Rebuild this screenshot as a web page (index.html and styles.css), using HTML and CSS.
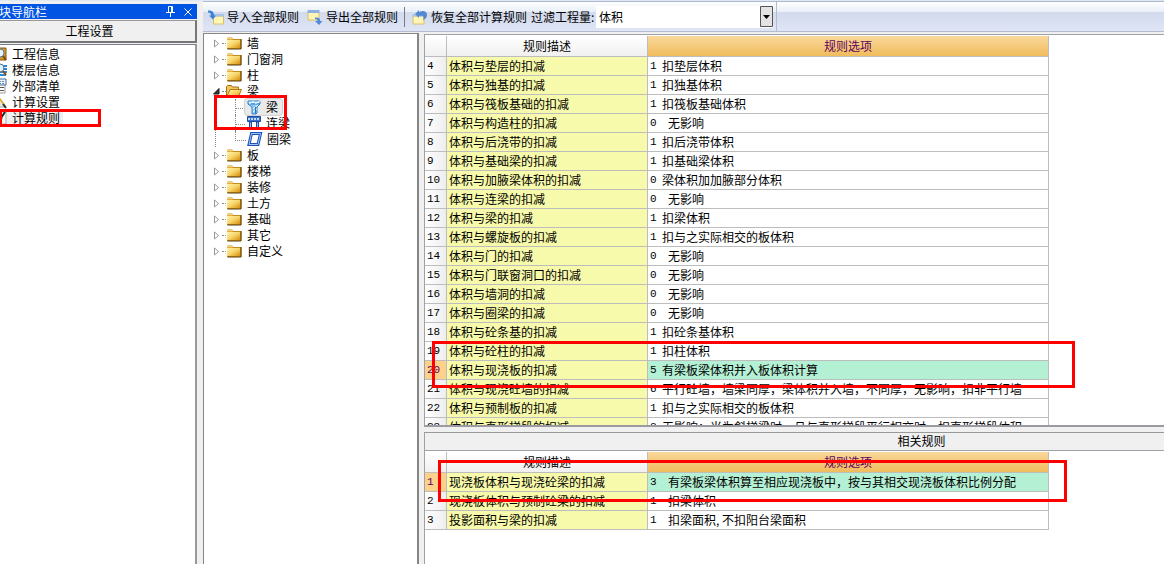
FILE: index.html
```html
<!DOCTYPE html>
<html lang="zh-CN">
<head>
<meta charset="utf-8">
<title>工程设置 - 计算规则</title>
<link rel="stylesheet" href="styles.css">
</head>
<body>
<svg class="defs" aria-hidden="true">
  <defs>
    <linearGradient id="gold" x1="0" y1="0" x2="1" y2="1"><stop offset="0" stop-color="#fff3a8"/><stop offset=".5" stop-color="#f7d46a"/><stop offset="1" stop-color="#d98e10"/></linearGradient>
    <symbol id="folder" viewBox="0 0 16 14"><path d="M1 2.500l1-1h4l1 1.500h8.500v10H1z" fill="#c78a1c"/><path d="M1 1.500h5l1 2H1z" fill="#f3d27c"/><path d="M1 4h13v8H1z" fill="url(#gold)"/><path d="M15 3v10H1.500" fill="none" stroke="#5e430c"/></symbol>
    <symbol id="folder-open" viewBox="0 0 16 14"><path d="M.5 12.500v-10l1-1h4l1 1.500h6v2" fill="#f3c760" stroke="#a5710f"/><path d="M1 12.500l3-7h11.500l-3 7z" fill="url(#gold)" stroke="#b37a12"/></symbol>
    <symbol id="closed" viewBox="0 0 7 9"><path d="M1.500 1v7l4-3.500z" fill="#fff" stroke="#999"/></symbol>
    <symbol id="opened" viewBox="0 0 7 7"><path d="M6 .5v5.500H.5z" fill="#333" stroke="#222"/></symbol>
    <symbol id="beam" viewBox="0 0 16 16"><path d="M2 2h12v3H2z" fill="#d9efff" stroke="#2d83cf"/><path d="M2 5h12l-3 3v6l-1 1H6V8z" fill="#8ec8f2" stroke="#2d83cf"/><path d="M3 5l5-3M9 5l5-3M7 10l5-4M7 13l4-3" fill="none" stroke="#f2faff"/><path d="M9.500 8v6.500" stroke="#2374c0"/></symbol>
    <symbol id="link-beam" viewBox="0 0 16 16"><path d="M1.500 1.500h13v5h-13z" fill="#3c73c8" stroke="#1c4ea5"/><path d="M2 4h12" stroke="#bcd9fa" stroke-width="2" stroke-dasharray="2 1"/><path d="M3.500 7h2v6h-2zM10.500 7h2v6h-2z" fill="#9ac5f5" stroke="#1c4ea5"/></symbol>
    <symbol id="ring-beam" viewBox="0 0 16 16"><path d="M4.500 2.500h9l-2.500 11H2z" fill="#fff" stroke="#1d51b8" stroke-width="3"/><path d="M4.500 2.500h9l-2.500 11H2z" fill="none" stroke="#9cc5f5"/></symbol>
  </defs>
</svg>
<div class="app">
  <aside class="side">
    <header class="side-title"><span class="side-name">模块导航栏</span>
      <button class="mini" aria-label="固定"><svg width="9" height="11" viewBox="0 0 9 11"><path d="M2.500 6V.5h4V6M5.500 1v5M0 6.500h9M4.500 7v4" fill="none" stroke="#fff"/></svg></button>
      <button class="mini" aria-label="关闭"><svg width="8" height="8" viewBox="0 0 8 8"><path d="M.5.5l7 7M7.500.5l-7 7" stroke="#fff"/></svg></button>
    </header>
    <button class="side-group">工程设置</button>
    <nav class="side-list">
      <a href="#"><svg width="16" height="16" viewBox="0 0 16 16"><path d="M4 2h11v12H4z" fill="#d69829" stroke="#865b13"/><circle cx="9" cy="7" r="4" fill="#e6f5ff" stroke="#567ca4"/><path d="M12 10l3 4" stroke="#7b4c14" stroke-width="2"/></svg>工程信息</a>
      <a href="#"><svg width="16" height="16" viewBox="0 0 16 16"><path d="M9 4h7M9 7h7M8 10h8M8 13h7" stroke="#278bd6" stroke-width="2"/><circle cx="9" cy="6" r="4" fill="#dff1fd" stroke="#4d7499"/><path d="M12 9l3 4" stroke="#9b4b12" stroke-width="2"/></svg>楼层信息</a>
      <a href="#"><svg width="16" height="16" viewBox="0 0 16 16"><path d="M4 6h10v9H4z" fill="#fff" stroke="#999"/><path d="M3 1h12v6H3z" fill="#eaf2fb" stroke="#486d98"/><path d="M5 3.500h9M5 5.500h9" stroke="#638cb9" stroke-dasharray="2 1"/><path d="M9 9.500h4M9 12.500h4" stroke="#555"/></svg>外部清单</a>
      <a href="#"><svg width="16" height="16" viewBox="0 0 16 16"><path d="M6 2l9 11H6z" fill="#e5e8eb" stroke="#9aa"/><path d="M6 1l8 11" stroke="#e4b03c" stroke-width="2"/><path d="M12 10l3 4" stroke="#333" stroke-width="2"/></svg>计算设置</a>
      <a href="#" class="current"><svg width="16" height="16" viewBox="0 0 16 16"><path d="M4 2h11v12H4z" fill="#f7f5ed" stroke="#aaa"/><path d="M14 2L8 11l-2 2" stroke="#222" stroke-width="2"/><path d="M8 12l3-4" stroke="#48a068" stroke-width="2"/></svg>计算规则</a>
    </nav>
  </aside>
  <main class="work">
    <div class="toolbar">
      <button class="tool"><svg width="16" height="16" viewBox="0 0 16 16"><path d="M5.500 7h10v8h-10z" fill="#fff5b5" stroke="#d8c06b"/><path d="M6 5h10v2.500H6z" fill="#a9c2ea"/><path d="M0 1.500c4 0 6 1 6 5h2L5 10.500 1 6.500h2c0-2-1-3-3-3z" fill="#3e82d6"/></svg>导入全部规则</button>
      <button class="tool tool-last"><svg width="16" height="16" viewBox="0 0 16 16"><path d="M1 3h11v8H1z" fill="#fff5b5" stroke="#d8c06b"/><path d="M.5 1h12v3H.5z" fill="#8fb0e4"/><path d="M8 8.500c3 0 5 0 5 3.500h2.500L12 16l-4-4h2.500c0-1.500-1-2-2.500-2z" fill="#4c89db"/></svg>导出全部规则</button>
      <span class="divider"></span>
      <button class="tool tool-reset"><svg width="16" height="16" viewBox="0 0 16 16"><path d="M1 7h11v8H1z" fill="#fff5b5" stroke="#d8c06b"/><path d="M.5 5h12v2.500H.5z" fill="#a9c2ea"/><path d="M3 5l4-4v2c4-2 8-1 8 3 0 3-2 4-4 5 1-3 1-5-4-4v2z" fill="#5489d2"/></svg>恢复全部计算规则</button>
      <label class="filter-label" for="filter">过滤工程量:</label>
      <span class="combo"><select id="filter"><option>体积</option></select><svg class="combo-arrow" width="13" height="21" viewBox="0 0 13 21"><path d="M.5.5h12v20H.5z" fill="#e3e3e3" stroke="#555"/><path d="M3 9h7l-3.500 4z"/></svg></span>
      <span class="toolbar-end"></span>
    </div>
    <div class="body">
      <section class="tree">
        <ul id="tree"></ul>
      </section>
      <div class="panes">
        <section class="pane pane-top"><table class="grid" id="rules"></table></section>
        <section class="pane pane-bottom">
          <h2 class="pane-title">相关规则</h2>
          <table class="grid" id="related"></table>
        </section>
      </div>
    </div>
  </main>
  <div class="mark mark-nav"></div>
  <div class="mark mark-tree"></div>
  <div class="mark mark-rule"></div>
  <div class="mark mark-related"></div>
</div>
<script src="app.js"></script>
</body>
</html>
```

FILE: styles.css
```css
* { box-sizing: border-box; }
body {
  margin: 0;
  background: #f0f0f0;
  color: #000;
  font: 12px/16px "Noto Sans CJK SC", sans-serif;
}
button, select { font: inherit; color: inherit; }
ul { list-style: none; margin: 0; padding: 0; }
.defs { position: absolute; width: 0; height: 0; }
.app {
  position: relative;
  display: flex;
  gap: 6px;
  height: 100vh;
  overflow: hidden;
  border-top: 1px solid #dfe7f5;
}

.side { display: flex; flex-direction: column; flex: none; width: 197px; padding-top: 3px; }
.side-title {
  display: flex;
  align-items: center;
  height: 15px;
  margin-bottom: 1px;
  padding-right: 0;
  background: #0054e3;
  color: #fff;
}
.side-name { display: flex; flex: 1; justify-content: flex-end; max-width: 47px; margin-right: auto; line-height: 14px; white-space: nowrap; }
.mini { display: flex; align-items: center; justify-content: center; width: 18px; height: 15px; padding: 0; border: 0; background: none; }
.side-group {
  height: 23px;
  margin-bottom: 1px;
  padding: 0 16px 0 0;
  border: solid;
  border-width: 1px 2px 2px 0;
  border-color: #999 #777 #777 #999;
  background: #f0f0f0;
}
.side-list {
  flex: 1;
  padding-top: 1px;
  border: solid #7b8088;
  border-width: 1px 2px 0 0;
  border-right-color: #999;
  background: #fff;
}
.side-list a { display: flex; align-items: center; width: 63px; height: 16px; color: #000; text-decoration: none; white-space: nowrap; }
.side-list svg { flex: none; margin: 0 5px 0 -9px; }
.side-list .current { background: #efefef; }

.work { display: flex; flex: 1; flex-direction: column; min-width: 0; }
.toolbar {
  display: flex;
  align-items: center;
  height: 31px;
  padding: 0 0 0 5px;
  border-top: 1px solid #aeb9cf;
  border-bottom: 1px solid #b4bccd;
  background: linear-gradient(#fdfeff, #e9eff8 34%, #d2daed 36%, #dfe5f5);
}
.tool { display: flex; align-items: center; gap: 3px; margin-right: 8px; padding: 0; border: 0; background: none; white-space: nowrap; }
.divider { width: 1px; height: 20px; margin-right: 7px; background: #777b88; }
.tool-last { margin-right: 6px; }
.tool-reset { margin-right: 4px; }
.filter-label { width: 65px; white-space: nowrap; }
.combo { position: relative; width: 177px; height: 22px; background: #fff; }
.combo select { width: 100%; height: 22px; padding: 0 16px 0 3px; border: 0; background: #fff; appearance: none; }
.combo-arrow { position: absolute; top: 0; right: 0; pointer-events: none; }
.toolbar-end { align-self: stretch; width: 4px; border-right: 1px solid #b4bccd; }

.body { display: flex; flex: 1; gap: 5px; min-height: 0; padding-top: 1px; }
.tree { flex: none; width: 216px; padding: 1px 0 0 9px; border: solid #858585; border-width: 1px 2px 0 1px; background: #fff; }
.node { display: flex; align-items: center; height: 16px; }
.twist { display: flex; align-items: center; width: 9px; height: 16px; padding: 0; border: 0; background: none; }
.stub { width: 4px; height: 1px; border-top: 1px dotted #888; }
.node .folder { margin-right: 5px; }
.branch { margin-left: 2px; padding-left: 19px; border-left: 1px dotted #888; }
.leaf { display: flex; height: 16px; border-left: 1px dotted transparent; }
.leaf:not(:last-child) { border-left-color: #888; }
.leaf::before { content: ""; width: 9px; height: 9px; border-bottom: 1px dotted #888; }
.leaf:last-child::before { width: 10px; margin-left: -1px; border-left: 1px dotted #888; }
.leaf-name { display: flex; align-items: center; gap: 4px; height: 16px; padding: 0 4px 0 1px; border: 0; border-radius: 3px; background: none; white-space: nowrap; }
.leaf .chosen { background: #e9e9e9; box-shadow: 0 0 0 1px #d2d2d2; }

.panes { display: flex; flex: 1; flex-direction: column; gap: 5px; min-width: 0; padding-top: 1px; }
.pane { overflow: hidden; border-left: 1px solid #a0a0a8; background: #fff; }
.pane-top { flex: 1; min-height: 0; border-top: 1px solid #a0a0a8; border-bottom: 2px solid #9a9aa0; }
.pane-bottom { flex: 0 0 132px; border-top: 1px solid #999; }
.pane-title { height: 18px; margin: 0; padding-left: 254px; border-bottom: 1px solid #a0a0a8; background: #f0f0f0; font: inherit; text-align: center; }
.grid { width: 624px; margin-top: 1px; border-collapse: separate; border-spacing: 0; table-layout: fixed; }
.grid th, .grid td { height: 19px; padding: 0 0 0 2px; border: solid #bdbdbd; border-width: 0 1px 1px 0; font-weight: 400; line-height: 18px; text-align: left; white-space: nowrap; }
.grid thead th { height: 21px; padding: 0; background: linear-gradient(#fff, #f0f0f0); line-height: 20px; text-align: center; }
.grid thead .hot { background: linear-gradient(#f9d89b, #f0bc5c); color: #600060; }
.col-no { width: 22px; }
.col-name { width: 201px; }
.grid .no { background: linear-gradient(90deg, #fff, #eee); font-family: "Liberation Mono", monospace; font-size: 11px; }
.grid .name { background: #f7faaa; }
.entry { display: flex; height: 18px; }
.code { flex: none; width: 12px; font-family: "Liberation Mono", monospace; font-size: 11px; }
.code.wide { width: 18px; }
.grid .selected .no { background: #fdd08b; color: #600060; }
.selected .option { background: #b4f0d4; }

.mark { position: absolute; border: 3px solid #f00; pointer-events: none; }
.mark-nav { left: -1px; top: 108px; width: 102px; height: 18px; }
.mark-tree { left: 214px; top: 94px; width: 73px; height: 35px; }
.mark-rule { left: 432px; top: 340px; width: 643px; height: 47px; }
.mark-related { left: 438px; top: 459px; width: 629px; height: 42px; }
```

FILE: app.js
```javascript
const icon = (id, w, h, cls = "") => `<svg class="${cls}" width="${w}" height="${h}"><use href="#${id}"/></svg>`;
const folders = ["墙", "门窗洞", "柱", "梁", "板", "楼梯", "装修", "土方", "基础", "其它", "自定义"];
const beams = [["beam", "梁"], ["link-beam", "连梁"], ["ring-beam", "圈梁"]];
document.getElementById("tree").innerHTML = folders.map(name => {
  const open = name === "梁";
  const twist = open ? icon("opened", 7, 7) : icon("closed", 7, 9);
  const leaves = beams.map(([id, text], i) =>
    `<li class="leaf"><button class="leaf-name${i ? "" : " chosen"}">${icon(id, 16, 16)}${text}</button></li>`).join("");
  return `<li><div class="node"><button class="twist" aria-label="${name}">${twist}</button><span class="stub"></span>${icon(open ? "folder-open" : "folder", 16, 14, "folder")}${name}</div>${open ? `<ul class="branch">${leaves}</ul>` : ""}</li>`;
}).join("");

const none = [0, "无影响", true];
const rules = [
  ["垫层", 1, "扣垫层体积"], ["独基", 1, "扣独基体积"], ["筏板基础", 1, "扣筏板基础体积"],
  ["构造柱", ...none], ["后浇带", 1, "扣后浇带体积"], ["基础梁", 1, "扣基础梁体积"],
  ["加腋梁体积", 0, "梁体积加加腋部分体积"], ["连梁", ...none], ["梁", 1, "扣梁体积"],
  ["螺旋板", 1, "扣与之实际相交的板体积"], ["门", ...none], ["门联窗洞口", ...none],
  ["墙洞", ...none], ["圈梁", ...none], ["砼条基", 1, "扣砼条基体积"], ["砼柱", 1, "扣柱体积"],
  ["现浇板", 5, "有梁板梁体积并入板体积计算"],
  ["现浇砼墙", 6, "平行砼墙，墙梁同厚，梁体积并入墙，不同厚，无影响，扣非平行墙"],
  ["预制板", 1, "扣与之实际相交的板体积"],
  ["直形梯段", 3, "无影响；当为斜梯梁时，且与直形梯段平行相交时，扣直形梯段体积"]
].map(([part, ...rest]) => [`体积与${part}的扣减`, ...rest]);
const related = [
  ["现浇板体积与现浇砼梁的扣减", 3, "有梁板梁体积算至相应现浇板中，按与其相交现浇板体积比例分配", true],
  ["现浇板体积与预制砼梁的扣减", 1, "扣梁体积", true],
  ["投影面积与梁的扣减", 1, "扣梁面积, 不扣阳台梁面积", true]
];
function fill(id, rows, first, selected) {
  document.getElementById(id).innerHTML =
    `<thead><tr><th class="col-no"></th><th class="col-name">规则描述</th><th class="hot">规则选项</th></tr></thead><tbody>` +
    rows.map(([name, code, text, wide], i) =>
      `<tr class="${first + i === selected ? "selected" : ""}"><th class="no">${first + i}</th><td class="name">${name}</td><td class="option"><div class="entry"><span class="code${wide ? " wide" : ""}">${code}</span>${text}</div></td></tr>`).join("") +
    "</tbody>";
}
fill("rules", rules, 4, 20);
fill("related", related, 1, 1);
```
